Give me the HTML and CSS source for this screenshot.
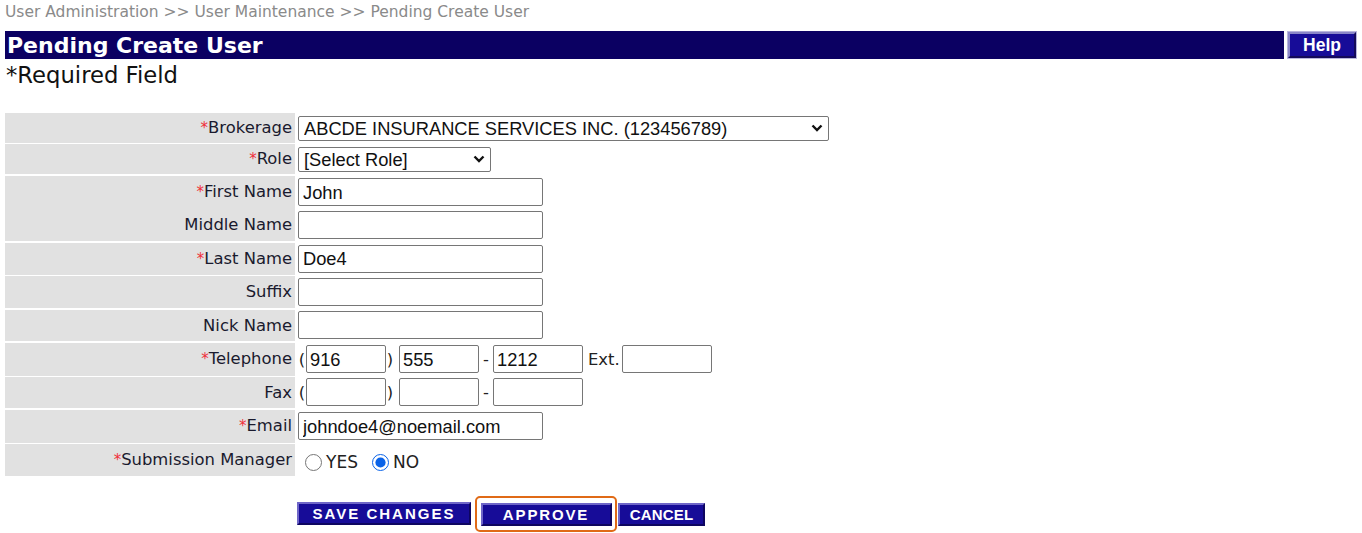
FILE: index.html
```html
<!DOCTYPE html>
<html>
<head>
<meta charset="utf-8">
<title>Pending Create User</title>
<link rel="stylesheet" href="styles.css">
</head>
<body>
<div class="crumbs">User Administration &gt;&gt; User Maintenance &gt;&gt; Pending Create User</div>
<div class="header">
  <div class="title">Pending Create User</div>
  <button class="help" type="button">Help</button>
</div>
<div class="required">*Required Field</div>

<form class="form">
  <div class="row r1">
    <div class="label"><span class="req">*</span>Brokerage</div>
    <div class="field">
      <select class="sel sel-wide"><option>ABCDE INSURANCE SERVICES INC. (123456789)</option></select>
    </div>
  </div>
  <div class="row r2">
    <div class="label"><span class="req">*</span>Role</div>
    <div class="field">
      <select class="sel sel-role"><option>[Select Role]</option></select>
    </div>
  </div>
  <div class="row r3">
    <div class="label"><span class="req">*</span>First Name</div>
    <div class="field"><input class="txt" type="text" value="John"></div>
  </div>
  <div class="row">
    <div class="label">Middle Name</div>
    <div class="field"><input class="txt" type="text" value=""></div>
  </div>
  <div class="row">
    <div class="label"><span class="req">*</span>Last Name</div>
    <div class="field"><input class="txt" type="text" value="Doe4"></div>
  </div>
  <div class="row">
    <div class="label">Suffix</div>
    <div class="field"><input class="txt" type="text" value=""></div>
  </div>
  <div class="row">
    <div class="label">Nick Name</div>
    <div class="field"><input class="txt" type="text" value=""></div>
  </div>
  <div class="row">
    <div class="label"><span class="req">*</span>Telephone</div>
    <div class="field phone">
      <span class="pn">(</span><input class="txt area" type="text" value="916"><span class="pn">)</span>
      <input class="txt pre" type="text" value="555"><span class="pn dash">-</span>
      <input class="txt num" type="text" value="1212"><span class="ext">Ext.</span><input class="txt extn" type="text" value="">
    </div>
  </div>
  <div class="row">
    <div class="label">Fax</div>
    <div class="field phone">
      <span class="pn">(</span><input class="txt area" type="text" value=""><span class="pn">)</span>
      <input class="txt pre" type="text" value=""><span class="pn dash">-</span>
      <input class="txt num" type="text" value="">
    </div>
  </div>
  <div class="row">
    <div class="label"><span class="req">*</span>Email</div>
    <div class="field"><input class="txt" type="text" value="johndoe4@noemail.com"></div>
  </div>
  <div class="row rlast">
    <div class="label"><span class="req">*</span>Submission Manager</div>
    <div class="field radios">
      <label class="opt"><input type="radio" name="sm">YES</label>
      <label class="opt"><input type="radio" name="sm" checked>NO</label>
    </div>
  </div>

  <div class="actions">
    <button class="btn save" type="button">SAVE CHANGES</button>
    <span class="focus-ring"><button class="btn approve" type="button">APPROVE</button></span>
    <button class="btn cancel" type="button">CANCEL</button>
  </div>
</form>
</body>
</html>
```

FILE: styles.css
```css
html, body {
  margin: 0;
  padding: 0;
  background: #fff;
}
body {
  padding: 0 6px 0 5px;
  font-family: "DejaVu Sans", Verdana, sans-serif;
  color: #1e1e2a;
}
.crumbs {
  height: 31px;
  line-height: 24px;
  font-size: 15.5px;
  color: #8a8a8a;
}
.header {
  display: flex;
  gap: 4px;
  height: 28px;
}
.title {
  flex: 1;
  background: #0b0062;
  color: #fff;
  font-weight: bold;
  font-size: 22px;
  line-height: 30px;
  padding-left: 2px;
}
.help {
  width: 68px;
  margin: 1px 0 1px 0;
  padding: 0;
  border: 2px solid;
  border-color: #8a86c8 #140a5a #140a5a #8a86c8;
  outline: 1px solid #b9b6dd;
  background: #170c98;
  color: #fff;
  font-family: "Liberation Sans", Arial, sans-serif;
  font-weight: bold;
  font-size: 17.5px;
  line-height: 22px;
}
.required {
  font-size: 22.7px;
  line-height: 32px;
  color: #111;
  padding-left: 1px;
  height: 54px;
}
.form {
  margin: 0;
  display: flex;
  flex-direction: column;
  gap: 2.5px;
}
.row {
  display: grid;
  grid-template-columns: 290px 1fr;
  column-gap: 3px;
  height: 31px;
}
.row.r1 { height: 28.5px; }
.row.r2 { height: 29.5px; }
.row.r3 { height: 30.5px; }
.row.rlast { height: 30px; }
.label {
  background: #e1e1e1;
  text-align: right;
  font-size: 16.4px;
  line-height: 31.5px;
  padding-right: 3px;
  white-space: nowrap;
  color: #1a1a2e;
}
.r1 .label, .r2 .label { line-height: 30px; }
.req {
  color: #f0303a;
  font-size: 15px;
}
.field {
  display: flex;
  align-items: center;
  font-size: 16.4px;
}
.sel {
  -webkit-appearance: none;
  appearance: none;
  font-family: "Liberation Sans", Arial, sans-serif;
  font-size: 18.3px;
  color: #111;
  height: 25px;
  border: 1px solid #767676;
  border-radius: 2px;
  background-color: #fff;
  background-image: url("data:image/svg+xml,%3Csvg xmlns='http://www.w3.org/2000/svg' width='12' height='8' viewBox='0 0 12 8'%3E%3Cpath d='M1.5 1.5 L6 6 L10.5 1.5' fill='none' stroke='%23111' stroke-width='2.4'/%3E%3C/svg%3E");
  background-repeat: no-repeat;
  background-position: right 5px center;
  padding: 0 4px 0 5px;
  line-height: 23px;
}
.sel-wide { width: 531px; }
.sel-role { width: 193px; }
.txt {
  box-sizing: border-box;
  font-family: "Liberation Sans", Arial, sans-serif;
  font-size: 18.3px;
  color: #111;
  height: 28px;
  width: 245px;
  border: 1px solid #767676;
  border-radius: 2px;
  padding: 1px 4px 0;
  margin: 0;
}
.phone .txt { width: 80px; padding-left: 3px; }
.phone .num { width: 90px; }
.phone .extn { width: 90px; }
.pn {
  font-family: "DejaVu Sans", Verdana, sans-serif;
  display: inline-block;
  width: 8px;
  text-align: center;
  color: #222;
}
.phone .pre { margin-left: 5px; }
.phone .dash { width: 14px; }
.ext {
  margin: 0 2px 0 5px;
  color: #222;
}
.radios {
  padding-left: 7px;
  align-items: center;
  padding-top: 5px;
}
.opt {
  display: inline-flex;
  align-items: center;
  margin-right: 14px;
  font-size: 17px;
  color: #222;
}
.opt input {
  width: 17px;
  height: 17px;
  margin: 0 4px 0 0;
  accent-color: #0a63e8;
}
.actions {
  display: flex;
  align-items: center;
  margin: 20px 0 0 292px;
  height: 36px;
}
.btn {
  height: 23px;
  padding: 0;
  border: 2px solid;
  border-color: #6f66c8 #0e0660 #0e0660 #6f66c8;
  background: #170c98;
  color: #fff;
  font-family: "Liberation Sans", Arial, sans-serif;
  font-weight: bold;
  font-size: 15px;
  letter-spacing: 2px;
  line-height: 19px;
}
.save { width: 174px; margin-top: -1px; }
.approve { width: 131px; letter-spacing: 1.85px; }
.cancel { width: 87px; letter-spacing: 0.2px; }
.focus-ring {
  display: flex;
  align-items: center;
  justify-content: center;
  box-sizing: border-box;
  width: 142px;
  height: 36px;
  margin: 0 1px 0 4px;
  border: 2px solid #e06a16;
  border-radius: 5px;
}
```
